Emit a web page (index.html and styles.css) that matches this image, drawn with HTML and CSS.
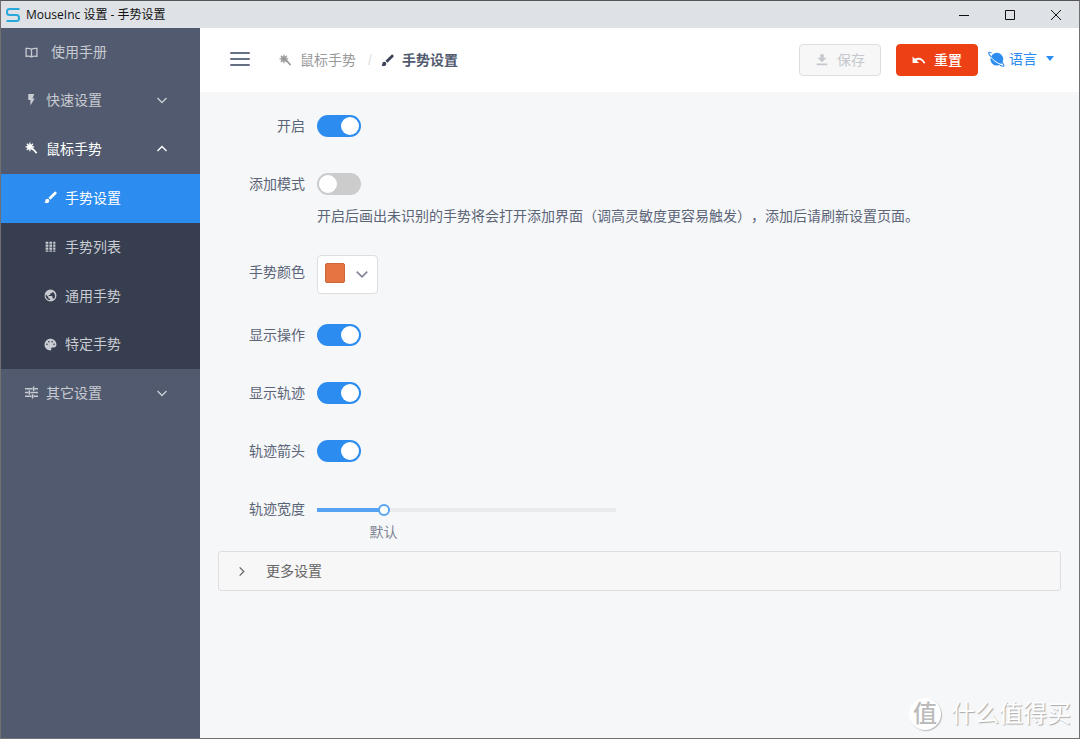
FILE: index.html
```html
<!DOCTYPE html>
<html lang="zh-CN">
<head>
<meta charset="utf-8">
<meta name="viewport" content="width=device-width, initial-scale=1">
<title>MouseInc 设置 - 手势设置</title>
<link rel="stylesheet" href="styles.css">
</head>
<body>
<svg class="defs" aria-hidden="true">
  <symbol id="wand" viewBox="0 0 24 24"><path d="M13 11l8.500 9.500" fill="none" stroke="currentColor" stroke-width="3"/><path d="M9 1v16M1 9h16M3.300 3.300l11.400 11.400M14.700 3.300L3.300 14.700" fill="none" stroke="currentColor" stroke-width="2.200"/><circle cx="9" cy="9" r="4" fill="none" stroke="currentColor" stroke-width="2"/></symbol>
  <symbol id="brush" viewBox="0 0 24 24"><path d="M6 14.500c-2 0-3.500 1.500-3.500 3.500 0 1.500-1 2.300-2 2.500 1 1.300 2.600 2 4.300 2 2.800 0 4.900-2.100 4.900-4.600 0-1.900-1.600-3.400-3.700-3.400zM23 2.600l-1.200-1.200a1.600 1.600 0 0 0-2.300 0L8.300 12.600l3.500 3.500L23 4.900a1.600 1.600 0 0 0 0-2.300z"/></symbol>
  <symbol id="down" viewBox="0 0 12 12"><path d="M1.500 4L6 8.500 10.500 4" fill="none" stroke="currentColor" stroke-width="1.400"/></symbol>
</svg>
<div class="window">
  <header class="titlebar">
    <svg class="logo" viewBox="0 0 16 16"><path d="M14.500 2H4.500a2.500 2.500 0 0 0-2.500 2.500v1A2.500 2.500 0 0 0 4.500 8h7a2.500 2.500 0 0 1 2.500 2.500v1a2.500 2.500 0 0 1-2.500 2.500H1.500" fill="none" stroke="#27a9dc" stroke-width="2"/></svg>
    <h1 class="title">MouseInc 设置 - 手势设置</h1>
    <div class="window-controls">
      <button class="window-button" aria-label="最小化"><svg viewBox="0 0 12 12"><path d="M1 6.500h10"/></svg></button>
      <button class="window-button" aria-label="最大化"><svg viewBox="0 0 12 12"><path d="M1.500 1.500h9v9h-9z"/></svg></button>
      <button class="window-button" aria-label="关闭"><svg viewBox="0 0 12 12"><path d="M1 1l10 10M11 1L1 11"/></svg></button>
    </div>
  </header>
  <div class="body">
    <nav class="sidebar">
      <a class="item item-first" href="#manual"><svg class="icon" viewBox="0 0 24 24"><path d="M12 6C9 4 6 4 2 4.500V19c4-.5 7-.5 10 1 3-1.500 6-1.500 10-1V4.500C18 4 15 4 12 6zv14" fill="none" stroke="currentColor" stroke-width="2.400"/></svg>使用手册</a>
      <button class="item"><svg class="icon" viewBox="0 0 24 24"><path d="M6 2v11h4v10l8-13h-4l3-8z"/></svg>快速设置<svg class="arrow"><use href="#down"/></svg></button>
      <button class="item item-open" aria-expanded="true"><svg class="icon"><use href="#wand"/></svg>鼠标手势<svg class="arrow arrow-up"><use href="#down"/></svg></button>
      <div class="submenu">
        <a class="item item-active" href="#settings" aria-current="page"><svg class="icon"><use href="#brush"/></svg>手势设置</a>
        <a class="item" href="#list"><svg class="icon" viewBox="0 0 24 24"><path d="M3 3h5v4H3zM10 3h5v4h-5zM17 3h4v4h-4zM3 8.500h5v4H3zM10 8.500h5v4h-5zM17 8.500h4v4h-4zM3 14h5v4H3zM10 14h5v4h-5zM17 14h4v4h-4zM3 19.500h5v2H3zM10 19.500h5v2h-5zM17 19.500h4v2h-4z"/></svg>手势列表</a>
        <a class="item" href="#global"><svg class="icon" viewBox="0 0 24 24"><path d="M12 1a11 11 0 1 0 0 22 11 11 0 0 0 0-22zm-1 19.900A9 9 0 0 1 3.300 10L8 14.800v1a2 2 0 0 0 3 2zm7.500-2.500a2 2 0 0 0-1.900-1.400h-1v-3a1 1 0 0 0-1-1h-6v-2h2a1 1 0 0 0 1-1V8h2a2 2 0 0 0 2-2v-.9a9 9 0 0 1 2.900 13.300z"/></svg>通用手势</a>
        <a class="item" href="#specific"><svg class="icon" viewBox="0 0 24 24"><path d="M12 1.500C6 1.500 1 6.500 1 12.500s5 10.500 11 10.500c1.500 0 2-1 1.500-2.200-1-1.800 0-3.300 1.800-3.300H18c3 0 5-2 5-5C23 6 18 1.500 12 1.500zM5.500 13a1.500 1.500 0 1 1 0-3 1.500 1.500 0 0 1 0 3zm3.500-4.500a1.500 1.500 0 1 1 0-3 1.500 1.500 0 0 1 0 3zm6 0a1.500 1.500 0 1 1 0-3 1.500 1.500 0 0 1 0 3zm3.500 4.500a1.500 1.500 0 1 1 0-3 1.500 1.500 0 0 1 0 3z"/></svg>特定手势</a>
      </div>
      <button class="item"><svg class="icon" viewBox="0 0 24 24"><path d="M0 5h14M18 5h6M16 1v8M0 12h6M10 12h14M8 8v8M0 19h12M16 19h8M14 15v8" fill="none" stroke="currentColor" stroke-width="2.800"/></svg>其它设置<svg class="arrow"><use href="#down"/></svg></button>
    </nav>
    <div class="content">
      <div class="toolbar">
        <button class="menu-button" aria-label="菜单"><svg viewBox="0 0 20 14"><path d="M1 1h18M1 7h18M1 13h18"/></svg></button>
        <nav class="breadcrumb" aria-label="位置">
          <a class="crumb" href="#gestures"><svg class="icon"><use href="#wand"/></svg>鼠标手势</a>
          <span class="separator">/</span>
          <span class="crumb crumb-current"><svg class="icon"><use href="#brush"/></svg>手势设置</span>
        </nav>
        <div class="actions">
          <button class="button" disabled><svg class="icon" viewBox="0 0 24 24"><path d="M9 2h6v6h5l-8 8-8-8h5zM3 18h18v3H3z"/></svg>保存</button>
          <button class="button button-danger"><svg class="icon" viewBox="0 0 24 24"><path d="M1 6v11h11l-4-4c4-3 9-1 12 5l3-1C19 9 11 6 5 10z"/></svg>重置</button>
          <button class="language" aria-haspopup="menu"><svg class="planet" viewBox="0 0 24 24"><circle cx="12.500" cy="11.500" r="9" fill="currentColor"/><path d="M2 5c3 7 11 13 20 15" fill="none" stroke="#fff" stroke-width="1.400"/><path d="M5 3C0 0-.5 3 4 8M20 16c4 5 3 7-3 4" fill="none" stroke="currentColor" stroke-width="1.600"/></svg>语言<svg class="caret" viewBox="0 0 10 6"><path d="M1 0h8L5 5z"/></svg></button>
        </div>
      </div>
      <main class="main">
        <form class="form">
          <div class="row"><label class="label" for="enabled">开启</label><div class="field"><input class="switch" type="checkbox" id="enabled" checked></div></div>
          <div class="row"><label class="label" for="add">添加模式</label><div class="field"><input class="switch" type="checkbox" id="add" aria-describedby="add-hint"><p class="hint" id="add-hint">开启后画出未识别的手势将会打开添加界面（调高灵敏度更容易触发），添加后请刷新设置页面。</p></div></div>
          <div class="row"><label class="label" for="color">手势颜色</label><div class="field"><button class="picker" type="button" id="color"><span class="swatch"></span><svg class="picker-arrow"><use href="#down"/></svg></button></div></div>
          <div class="row"><label class="label" for="action">显示操作</label><div class="field"><input class="switch" type="checkbox" id="action" checked></div></div>
          <div class="row"><label class="label" for="track">显示轨迹</label><div class="field"><input class="switch" type="checkbox" id="track" checked></div></div>
          <div class="row"><label class="label" for="arrow">轨迹箭头</label><div class="field"><input class="switch" type="checkbox" id="arrow" checked></div></div>
          <div class="row row-slider"><label class="label" for="width">轨迹宽度</label><div class="field"><input class="slider" type="range" id="width" min="0" max="80" value="17"><div class="mark">默认</div></div></div>
        </form>
        <details class="more"><summary class="more-title"><svg class="more-arrow"><use href="#down"/></svg>更多设置</summary></details>
      </main>
    </div>
  </div>
  <div class="watermark"><span class="watermark-badge">值</span>什么值得买</div>
</div>
</body>
</html>
```
FILE: styles.css
```css
* { box-sizing: border-box; }
body {
  margin: 0;
  font: 14px/20px "Liberation Sans", "Noto Sans CJK SC", sans-serif;
  color: #5c6477;
}
button { font: inherit; color: inherit; border: 0; padding: 0; background: none; cursor: pointer; }
a { color: inherit; text-decoration: none; }
.defs { position: absolute; width: 0; height: 0; }

.window {
  position: relative;
  display: flex;
  flex-direction: column;
  min-height: 100vh;
  border: 1px solid #707072;
  border-top-color: #555558;
  background: #f5f7f9;
}
.titlebar {
  display: flex;
  align-items: center;
  height: 27px;
  padding-left: 4px;
  background: #dee1e6;
  color: #111;
}
.logo { width: 16px; height: 16px; }
.title { flex: 1; margin: 0 0 0 5px; font: 12px/20px "Open Sans", "Noto Sans CJK SC", sans-serif; }
.window-controls { display: flex; }
.window-button { display: grid; place-items: center; width: 46px; height: 27px; }
.window-button svg { width: 12px; height: 12px; fill: none; stroke: #111; stroke-width: 1; }

.body { display: flex; flex: 1; }
.sidebar { flex: none; width: 199px; background: #515a6e; color: #c8cbd1; }
.item {
  display: flex;
  align-items: center;
  width: 100%;
  height: 49px;
  padding: 0 32px 2px 24px;
  gap: 7px;
  text-align: left;
}
.item-first { height: 48px; padding-bottom: 0; gap: 12px; }
.item-open { color: #fff; }
.submenu { background: #363e4f; }
.submenu .item { padding-left: 43px; }
.submenu .item:last-child { height: 48px; }
.submenu .item-active { background: #2d8cf0; color: #fff; }
.icon { flex: none; width: 14px; height: 14px; fill: currentColor; }
.sidebar .icon { width: 13px; height: 13px; margin-right: 1px; }
.arrow { width: 12px; height: 12px; margin-left: auto; }
.arrow-up { transform: rotate(180deg); }

.content { flex: 1; min-width: 0; }
.toolbar {
  display: flex;
  align-items: center;
  height: 64px;
  padding: 0 24px 0 29px;
  background: #fff;
}
.menu-button { width: 22px; padding-bottom: 3px; }
.menu-button svg { display: block; width: 22px; height: 14px; fill: none; stroke: #657085; stroke-width: 2; stroke-linecap: round; }
.breadcrumb { display: flex; margin-left: 28px; }
.crumb { display: flex; align-items: center; gap: 8px; color: #999; }
.crumb .icon { width: 13px; height: 13px; }
.crumb-current { font-weight: bold; color: #515a6e; }
.crumb-current .icon { color: #394358; }
.separator { margin: 0 9px 0 12px; color: #dcdee2; }
.actions { display: flex; align-items: center; margin-left: auto; }
.button {
  display: flex;
  align-items: center;
  justify-content: center;
  gap: 8px;
  width: 82px;
  height: 32px;
  margin-right: 15px;
  border: 1px solid #dcdee2;
  border-radius: 4px;
  background: #f7f7f7;
  color: #c5c8ce;
}
.button-danger { margin-right: 10px; border-color: #ed4014; background: #ed4014; color: #fff; font-weight: 500; }
.language { display: flex; align-items: center; gap: 4px; padding-bottom: 2px; color: #2d8cf0; }
.planet { width: 17px; height: 17px; }
.caret { width: 10px; height: 6px; margin-left: 4px; fill: currentColor; }

.main { padding: 17px 18px; }
.row { display: flex; margin-bottom: 24px; }
.row-slider { margin-bottom: 9px; }
.label { flex: none; width: 99px; padding-right: 12px; text-align: right; line-height: 34px; }
.field { flex: 1; min-height: 34px; }
.switch {
  appearance: none;
  display: block;
  width: 44px;
  height: 22px;
  margin: 6px 0;
  padding: 2px;
  border-radius: 11px;
  background: #ccc;
}
.switch::before { content: ""; display: block; width: 18px; height: 18px; border-radius: 50%; background: #fff; }
.switch:checked { background: #2d8cf0; }
.switch:checked::before { margin-left: auto; }
.hint { margin: 0; line-height: 30px; text-spacing-trim: space-all; }
.picker {
  display: flex;
  align-items: center;
  gap: 10px;
  height: 39px;
  padding: 0 8px 3px 7px;
  border: 1px solid #dcdee2;
  border-radius: 4px;
  background: #fff;
}
.swatch { width: 20px; height: 20px; border: 1px solid #c9673d; border-radius: 2px; background: #e57442; }
.picker-arrow { width: 14px; height: 14px; margin-top: 2px; color: #808695; }
.slider {
  appearance: none;
  display: block;
  width: 299px;
  max-width: 100%;
  height: 12px;
  margin: 12px 0 6px;
  border-radius: 2px;
  background: linear-gradient(90deg, #57a3f3 22%, #e8eaec 22%) center / 100% 4px no-repeat;
}
.slider::-webkit-slider-thumb {
  appearance: none;
  width: 12px;
  height: 12px;
  border: 2px solid #57a3f3;
  border-radius: 50%;
  background: #fff;
}
.mark { width: 133px; text-align: center; color: #808695; }
.more { border: 1px solid #dcdee2; border-radius: 3px; background: #f7f7f7; color: #666; }
.more-title { display: flex; align-items: center; gap: 19px; height: 38px; padding-left: 17px; list-style: none; cursor: pointer; }
.more-arrow { width: 11px; height: 11px; transform: rotate(-90deg); }

.watermark {
  position: absolute;
  right: 8px;
  bottom: 8px;
  display: flex;
  align-items: center;
  gap: 10px;
  font-size: 24px;
  line-height: 32px;
  color: #fff;
  text-shadow: 1px 1px 1px #aaa;
}
.watermark-badge {
  width: 32px;
  height: 32px;
  border-radius: 50%;
  background: #fff;
  box-shadow: 1px 1px 1px #bbb;
  color: #bbb;
  font-weight: 500;
  text-align: center;
  text-shadow: none;
}
```
